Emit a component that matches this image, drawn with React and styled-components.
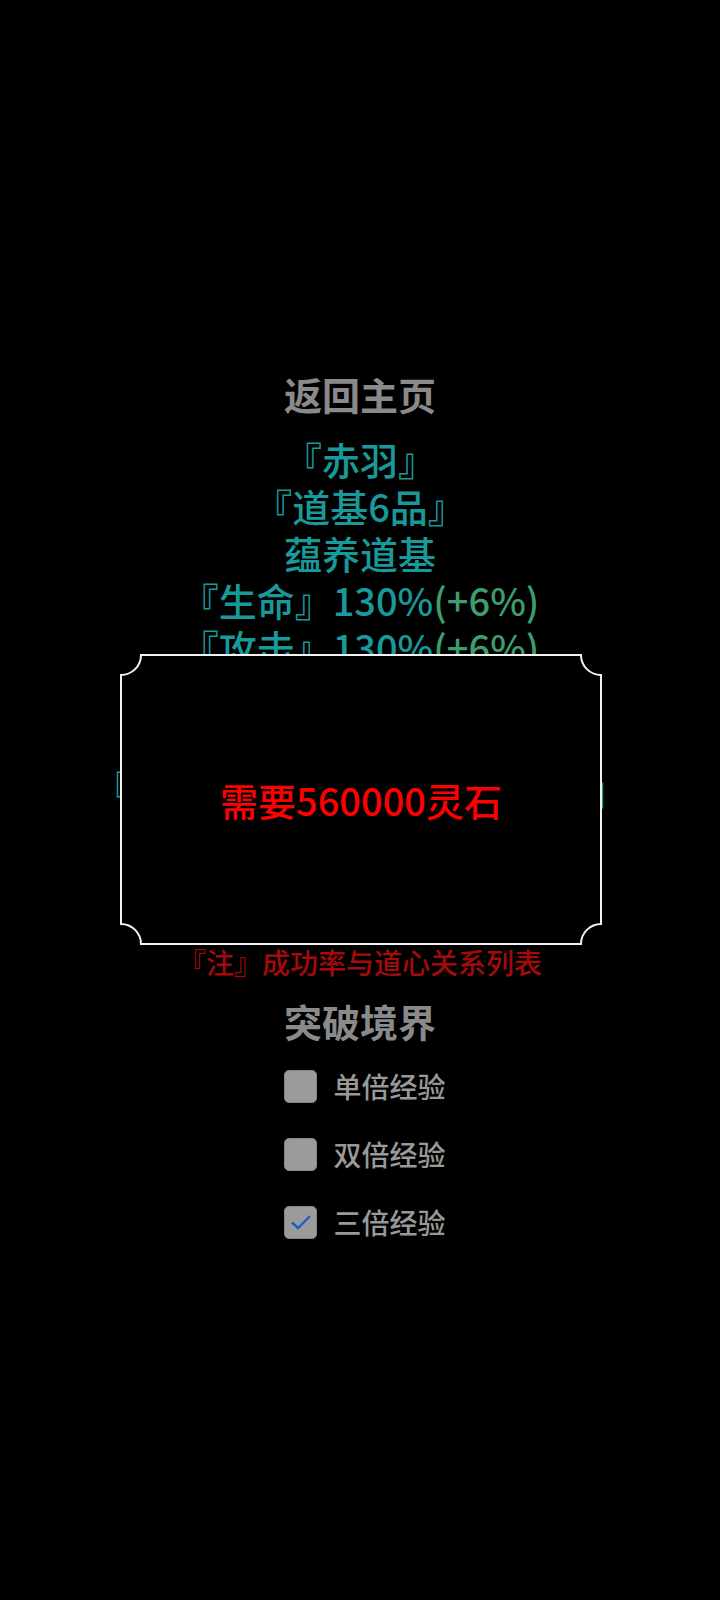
import styled, { createGlobalStyle } from "styled-components"

const GlobalStyle = createGlobalStyle`
    html, body {
        margin: 0;
        padding: 0;
        background-color: #000;
    }
    body {
        font-family: "Noto Sans CJK SC", "Noto Sans", sans-serif;
    }
`

const Page = styled.div`
    position: relative;
    width: 720px;
    min-height: 1600px;
    padding-top: 370px;
    box-sizing: border-box;
    display: flex;
    flex-direction: column;
    align-items: center;
    background-color: #000;
`

const Heading = styled.div`
    font-size: 38px;
    line-height: 47px;
    font-weight: 700;
    color: #8a8a8a;
    text-align: center;
    margin-top: ${(props) => props.gap || 0}px;
    cursor: pointer;
`

const InfoList = styled.div`
    margin-top: 18px;
    display: flex;
    flex-direction: column;
    align-items: center;
`

const InfoLine = styled.div`
    font-size: 38px;
    line-height: 47px;
    font-weight: 500;
    color: #199a9a;
    white-space: nowrap;
    text-align: center;
`

const Bonus = styled.span`
    color: #3d9e6b;
`

const Note = styled.div`
    margin-top: 39px;
    font-size: 28px;
    line-height: 36px;
    font-weight: 500;
    color: #a30b0b;
    white-space: nowrap;
`

const Options = styled.div`
    margin-top: 8px;
    display: flex;
    flex-direction: column;
`

const OptionRow = styled.label`
    height: 68px;
    display: flex;
    align-items: center;
    gap: 16px;
    padding-left: 10px;
    cursor: pointer;
`

const Box = styled.span`
    width: 33px;
    height: 33px;
    box-sizing: border-box;
    border-radius: 5px;
    border: 1.5px solid #858585;
    background-color: #9b9b9b;
    display: flex;
    align-items: center;
    justify-content: center;
`

const OptionText = styled.span`
    font-size: 28px;
    line-height: 36px;
    font-weight: 500;
    color: #999;
`

const Modal = styled.div`
    position: absolute;
    top: 654px;
    left: 120px;
    width: 482px;
    height: 291px;
    background-color: #000;
    display: flex;
    align-items: center;
    justify-content: center;
`

const Frame = styled.svg`
    position: absolute;
    inset: 0;
    width: 100%;
    height: 100%;
`

const ModalText = styled.div`
    position: relative;
    font-size: 38px;
    line-height: 47px;
    font-weight: 500;
    color: #f00;
`

const lines = [
    { text: "『赤羽』" },
    { text: "『道基6品』" },
    { text: "蕴养道基" },
    { text: "『生命』130%", bonus: "(+6%)" },
    { text: "『攻击』130%", bonus: "(+6%)" },
    { text: "『防御』130%", bonus: "(+6%)" },
    { text: "『道心』100%", bonus: "(+0%)" },
    { text: "『当前境界突破成功率百分百』" },
    { text: "『成功率』100%" },
    { text: "『消耗』灵石" },
]

const options = [
    { label: "单倍经验", checked: false },
    { label: "双倍经验", checked: false },
    { label: "三倍经验", checked: true },
]

const FramePath = ({ w, h, r }) => (
    <Frame viewBox={`0 0 ${w} ${h}`}>
        <path
            d={`M ${r + 1} 1 H ${w - r - 1} A ${r} ${r} 0 0 0 ${w - 1} ${r + 1} V ${h - r - 1} A ${r} ${r} 0 0 0 ${w - r - 1} ${h - 1} H ${r + 1} A ${r} ${r} 0 0 0 1 ${h - r - 1} V ${r + 1} A ${r} ${r} 0 0 0 ${r + 1} 1 Z`}
            fill="none"
            stroke="#f2f2f2"
            strokeWidth="2"
        />
    </Frame>
)

const App = () => {
    return (
        <>
            <GlobalStyle />
            <Page>
                <Heading>返回主页</Heading>
                <InfoList>
                    {lines.map(({ text, bonus }, i) => (
                        <InfoLine key={i}>
                            {text}
                            {bonus && <Bonus>{bonus}</Bonus>}
                        </InfoLine>
                    ))}
                </InfoList>
                <Note>『注』成功率与道心关系列表</Note>
                <Heading gap={17}>突破境界</Heading>
                <Options>
                    {options.map(({ label, checked }) => (
                        <OptionRow key={label}>
                            <Box>
                                {checked && (
                                    <svg width="24" height="24" viewBox="0 0 24 24">
                                        <path
                                            d="M3 12.5 L9 18 L21 6"
                                            fill="none"
                                            stroke="#1f5fbf"
                                            strokeWidth="2.4"
                                        />
                                    </svg>
                                )}
                            </Box>
                            <OptionText>{label}</OptionText>
                        </OptionRow>
                    ))}
                </Options>
                <Modal>
                    <FramePath w={482} h={291} r={20} />
                    <ModalText>需要560000灵石</ModalText>
                </Modal>
            </Page>
        </>
    )
}

export default App
